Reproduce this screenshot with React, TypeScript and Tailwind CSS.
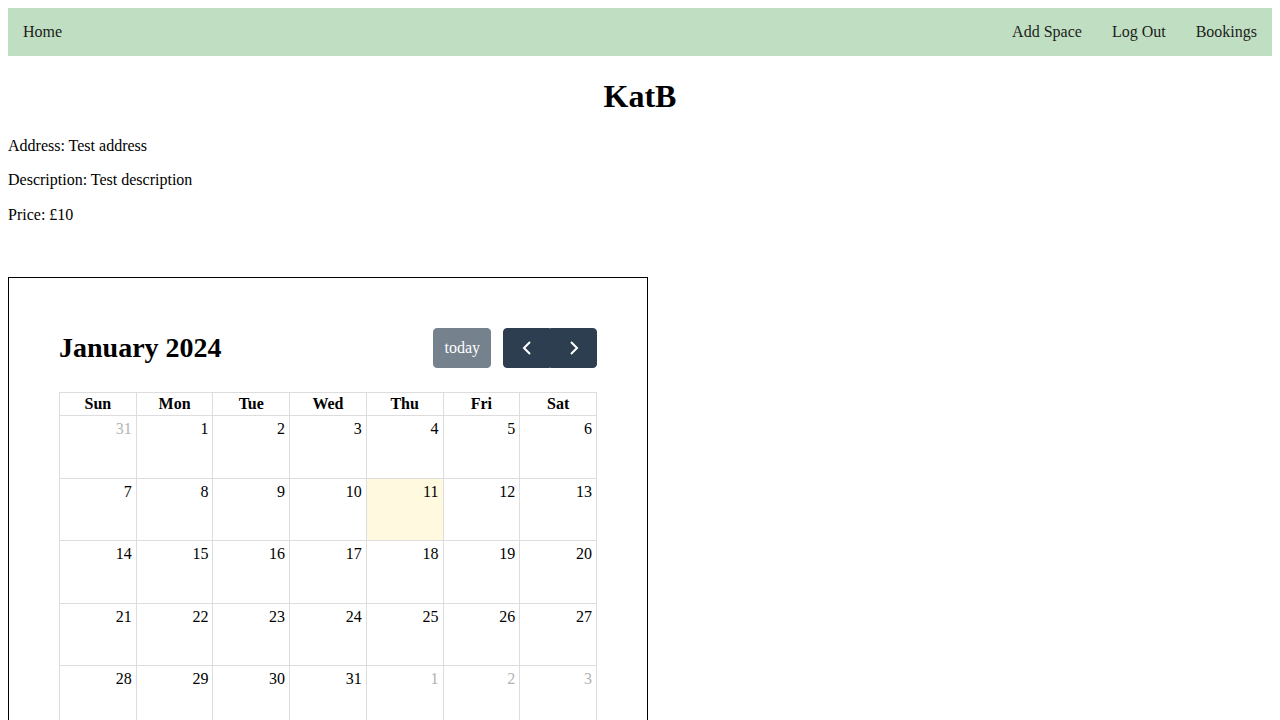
import React from 'react';

const weeks: { d: number; muted?: boolean; today?: boolean }[][] = [
  [{ d: 31, muted: true }, { d: 1 }, { d: 2 }, { d: 3 }, { d: 4 }, { d: 5 }, { d: 6 }],
  [{ d: 7 }, { d: 8 }, { d: 9 }, { d: 10 }, { d: 11, today: true }, { d: 12 }, { d: 13 }],
  [{ d: 14 }, { d: 15 }, { d: 16 }, { d: 17 }, { d: 18 }, { d: 19 }, { d: 20 }],
  [{ d: 21 }, { d: 22 }, { d: 23 }, { d: 24 }, { d: 25 }, { d: 26 }, { d: 27 }],
  [{ d: 28 }, { d: 29 }, { d: 30 }, { d: 31 }, { d: 1, muted: true }, { d: 2, muted: true }, { d: 3, muted: true }],
  [{ d: 4, muted: true }, { d: 5, muted: true }, { d: 6, muted: true }, { d: 7, muted: true }, { d: 8, muted: true }, { d: 9, muted: true }, { d: 10, muted: true }],
];

const days = ['Sun', 'Mon', 'Tue', 'Wed', 'Thu', 'Fri', 'Sat'];

function Chevron({ dir }: { dir: 'left' | 'right' }) {
  return (
    <svg viewBox="0 0 24 24" className="w-6 h-6" fill="none" stroke="currentColor" strokeWidth="2">
      {dir === 'left' ? <path d="M15 6l-6 6 6 6" /> : <path d="M9 6l6 6-6 6" />}
    </svg>
  );
}

export default function App() {
  return (
    <div className="p-2 font-['Liberation_Serif',serif] leading-[1.15] text-black bg-white">
      {/* top nav */}
      <nav className="flex items-center bg-[#c0dfc2] h-12 text-base text-[#1c1c1c]">
        <a className="px-[15px]">Home</a>
        <div className="ml-auto flex">
          <a className="px-[15px]">Add Space</a>
          <a className="px-[15px]">Log Out</a>
          <a className="px-[15px]">Bookings</a>
        </div>
      </nav>

      <h1 className="text-center text-[32px] font-bold mt-[21.5px] mb-[22.5px]">KatB</h1>
      <p className="my-4">Address: Test address</p>
      <p className="my-4">Description: Test description</p>
      <p className="my-4">Price: £10</p>

      <div className="w-[640px] mt-[53px] border border-black p-[50px]">
        <div className="flex items-center justify-between mb-6">
          <h2 className="text-[28px] font-bold">January 2024</h2>
          <div className="flex items-center">
            <button className="bg-[#2c3e50] opacity-65 text-white border border-[#2c3e50] rounded px-[10.4px] py-[7px] leading-6">
              today
            </button>
            <div className="flex ml-3">
              <button className="bg-[#2c3e50] text-white border border-[#2c3e50] rounded-l px-[10.4px] py-[7px] leading-6">
                <Chevron dir="left" />
              </button>
              <button className="bg-[#2c3e50] text-white border border-[#2c3e50] rounded-r px-[10.4px] py-[7px] leading-6">
                <Chevron dir="right" />
              </button>
            </div>
          </div>
        </div>

        <table className="w-full table-fixed border-collapse">
          <thead>
            <tr>
              {days.map((d) => (
                <th key={d} className="border border-[#ddd] px-1 py-[2px] font-bold text-center">
                  {d}
                </th>
              ))}
            </tr>
          </thead>
          <tbody>
            {weeks.map((w, i) => (
              <tr key={i}>
                {w.map((c, j) => (
                  <td
                    key={j}
                    className={
                      'border border-[#ddd] h-[62.4px] align-top text-right p-0 ' +
                      (c.today ? 'bg-[#fff9df]' : '')
                    }
                  >
                    <div className={'p-1 ' + (c.muted ? 'text-[#b3b3b3]' : '')}>{c.d}</div>
                  </td>
                ))}
              </tr>
            ))}
          </tbody>
        </table>
      </div>
    </div>
  );
}
